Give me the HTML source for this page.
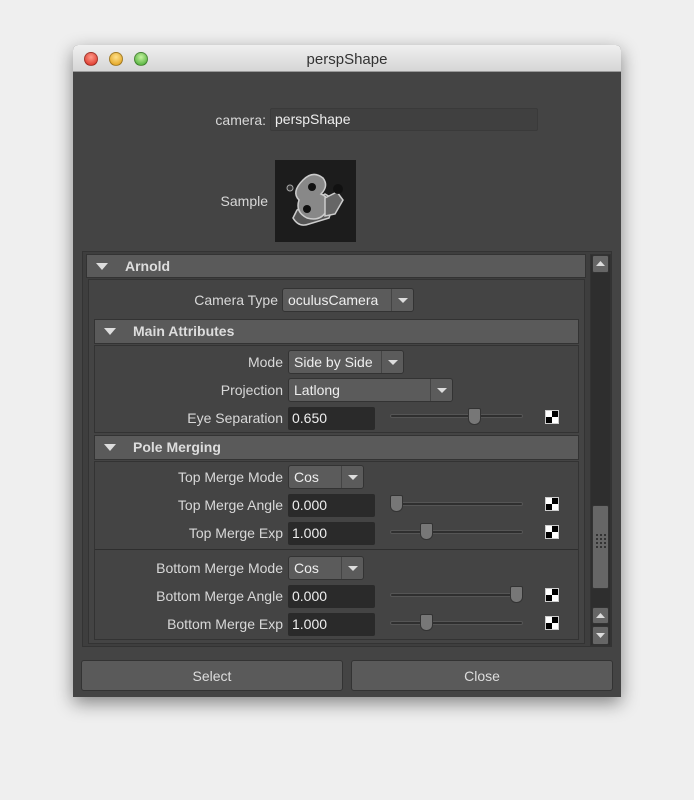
<!DOCTYPE html>
<html><head><style>
*{margin:0;padding:0;box-sizing:border-box}
body{width:694px;height:800px;background:#efefef;position:relative;overflow:hidden;font-family:"Liberation Sans",sans-serif;font-size:14px;color:#ddd}
div,span{position:absolute}
.win{left:73px;top:45px;width:548px;height:652px;background:#444;border-radius:5px 5px 0 0;box-shadow:0 6px 18px rgba(0,0,0,.45);overflow:hidden}
.title{left:0;top:0;width:548px;height:27px;background:linear-gradient(#f0f0f0,#d6d6d6);border-bottom:1px solid #999;color:#333;font-size:15px;text-align:center;line-height:29px}
.tl{top:7px;width:14px;height:14px;border-radius:50%;border:1px solid rgba(0,0,0,.3)}
.lab{text-align:right;white-space:nowrap;color:#d8d8d8}
.fld{background:#2a2a2a;border-radius:2px;color:#eee;padding-left:4px;line-height:23px}
.dd{background:#5b5b5b;border:1px solid #333;border-radius:3px;color:#eee;padding-left:5px;line-height:23px}
.dd i{position:absolute;right:0;top:0;bottom:0;width:22px;border-left:1px solid #444;font-style:normal}
.dd i:after{content:"";position:absolute;left:6px;top:9px;border:5px solid transparent;border-top:5px solid #ddd;border-bottom:0}
.hdr{background:#5a5a5a;border:1px solid #333;font-weight:bold;color:#ddd;line-height:23px;padding-left:38px}
.hdr:before{content:"";position:absolute;left:9px;top:8px;border:6px solid transparent;border-top:7px solid #ddd;border-bottom:0}
.sl{height:4px;background:#2f2f2f;border:1px solid #555;border-radius:2px}
.th{width:13px;height:17px;background:#777;border:1px solid #333;border-radius:2px 2px 6px 6px}
.ck{width:14px;height:14px;border:1px solid #ccc;background:conic-gradient(#000 0 25%,#fff 0 50%,#000 0 75%,#fff 0)}
.btn{height:31px;background:#5a5a5a;border:1px solid #333;border-radius:3px;text-align:center;line-height:30px;color:#ddd}
.sb{background:#666;border:1px solid #333;border-radius:2px}
</style></head><body>
<div class="win">
 <div class="title">perspShape</div>
 <div class="tl" style="left:11px;background:radial-gradient(circle at 50% 35%,#ff9a8a,#d8271b)"></div>
 <div class="tl" style="left:36px;background:radial-gradient(circle at 50% 35%,#ffe08a,#dd9a10)"></div>
 <div class="tl" style="left:61px;background:radial-gradient(circle at 50% 35%,#c5f3a0,#3ea52a)"></div>
</div>
<div class="lab" style="left:150px;width:116px;top:112px">camera:</div>
<div class="fld" style="left:270px;top:108px;width:268px;height:23px;background:#404040;border:1px solid #3a3a3a;line-height:21px">perspShape</div>
<div class="lab" style="left:150px;width:118px;top:193px">Sample</div>
<div style="left:275px;top:160px;width:81px;height:82px;background:#1c1c1c">
 <svg width="81" height="82" viewBox="0 0 81 82"><g fill="#888" stroke="#ccc" stroke-width="1.5"><path d="M22 50 l-4 8 q6 10 16 6 l20 -6 l6 -18 l-10 -6z" fill="#555"/><path d="M28 20 q10-10 20-2 q6 8-2 16 q10 4 6 16 q-6 12-20 8 q-12-6-8-18 q-8-8 4-20z"/><path d="M50 38 l12 -6 l6 8 l-8 14 l-10 2z" fill="#666"/></g><circle cx="37" cy="27" r="4" fill="#111"/><circle cx="32" cy="49" r="4" fill="#111"/><circle cx="15" cy="28" r="3" fill="#333" stroke="#aaa"/><circle cx="63" cy="29" r="5" fill="#111"/></svg>
</div>
<div style="left:82px;top:251px;width:530px;height:396px;border:1px solid #333;background:#3e3e3e"></div>
<div class="hdr" style="left:86px;top:254px;width:500px;height:24px">Arnold</div>
<div style="left:88px;top:279px;width:497px;height:365px;border:1px solid #333;background:#444"></div>
<div class="lab" style="left:150px;width:128px;top:292px">Camera Type</div>
<div class="dd" style="left:282px;top:288px;width:132px;height:24px">oculusCamera<i></i></div>
<div class="hdr" style="left:94px;top:319px;width:485px;height:25px">Main Attributes</div>
<div style="left:94px;top:345px;width:485px;height:88px;border:1px solid #333"></div>
<div class="lab" style="left:150px;width:133px;top:354px">Mode</div>
<div class="dd" style="left:288px;top:350px;width:116px;height:24px">Side by Side<i></i></div>
<div class="lab" style="left:150px;width:133px;top:382px">Projection</div>
<div class="dd" style="left:288px;top:378px;width:165px;height:24px">Latlong<i></i></div>
<div class="lab" style="left:150px;width:133px;top:410px">Eye Separation</div>
<div class="fld" style="left:288px;top:407px;width:87px;height:23px">0.650</div>
<div class="sl" style="left:390px;top:414px;width:133px"></div><div class="th" style="left:468px;top:408px"></div>
<div class="ck" style="left:545px;top:410px"></div>
<div class="hdr" style="left:94px;top:435px;width:485px;height:25px">Pole Merging</div>
<div style="left:94px;top:461px;width:485px;height:179px;border:1px solid #333"></div>
<div style="left:95px;top:549px;width:483px;height:1px;background:#2e2e2e"></div>
<div class="lab" style="left:120px;width:163px;top:469px">Top Merge Mode</div>
<div class="dd" style="left:288px;top:465px;width:76px;height:24px">Cos<i></i></div>
<div class="lab" style="left:120px;width:163px;top:497px">Top Merge Angle</div>
<div class="fld" style="left:288px;top:494px;width:87px;height:23px">0.000</div>
<div class="sl" style="left:390px;top:502px;width:133px"></div><div class="th" style="left:390px;top:495px"></div>
<div class="ck" style="left:545px;top:497px"></div>
<div class="lab" style="left:120px;width:163px;top:525px">Top Merge Exp</div>
<div class="fld" style="left:288px;top:522px;width:87px;height:23px">1.000</div>
<div class="sl" style="left:390px;top:530px;width:133px"></div><div class="th" style="left:420px;top:523px"></div>
<div class="ck" style="left:545px;top:525px"></div>
<div class="lab" style="left:120px;width:163px;top:560px">Bottom Merge Mode</div>
<div class="dd" style="left:288px;top:556px;width:76px;height:24px">Cos<i></i></div>
<div class="lab" style="left:120px;width:163px;top:588px">Bottom Merge Angle</div>
<div class="fld" style="left:288px;top:585px;width:87px;height:23px">0.000</div>
<div class="sl" style="left:390px;top:593px;width:133px"></div><div class="th" style="left:510px;top:586px"></div>
<div class="ck" style="left:545px;top:588px"></div>
<div class="lab" style="left:120px;width:163px;top:616px">Bottom Merge Exp</div>
<div class="fld" style="left:288px;top:613px;width:87px;height:23px">1.000</div>
<div class="sl" style="left:390px;top:621px;width:133px"></div><div class="th" style="left:420px;top:614px"></div>
<div class="ck" style="left:545px;top:616px"></div>
<div style="left:590px;top:254px;width:21px;height:392px;background:#2e2e2e;border:1px solid #333"></div>
<div class="sb" style="left:592px;top:255px;width:17px;height:18px"><svg width="15" height="16"><path d="M3 10 L7.5 5 L12 10z" fill="#ddd"/></svg></div>
<div class="sb" style="left:592px;top:505px;width:17px;height:84px"><svg width="15" height="82"><g fill="#333"><rect x="3" y="28" width="2" height="2"/><rect x="7" y="28" width="2" height="2"/><rect x="11" y="28" width="2" height="2"/><rect x="3" y="32" width="2" height="2"/><rect x="7" y="32" width="2" height="2"/><rect x="11" y="32" width="2" height="2"/><rect x="3" y="36" width="2" height="2"/><rect x="7" y="36" width="2" height="2"/><rect x="11" y="36" width="2" height="2"/><rect x="3" y="40" width="2" height="2"/><rect x="7" y="40" width="2" height="2"/><rect x="11" y="40" width="2" height="2"/></g></svg></div>
<div class="sb" style="left:592px;top:607px;width:17px;height:17px"><svg width="15" height="15"><path d="M3 10 L7.5 5 L12 10z" fill="#ddd"/></svg></div>
<div class="sb" style="left:592px;top:626px;width:17px;height:19px"><svg width="15" height="17"><path d="M3 6 L7.5 11 L12 6z" fill="#ddd"/></svg></div>
<div class="btn" style="left:81px;top:660px;width:262px">Select</div>
<div class="btn" style="left:351px;top:660px;width:262px">Close</div>
</body></html>
